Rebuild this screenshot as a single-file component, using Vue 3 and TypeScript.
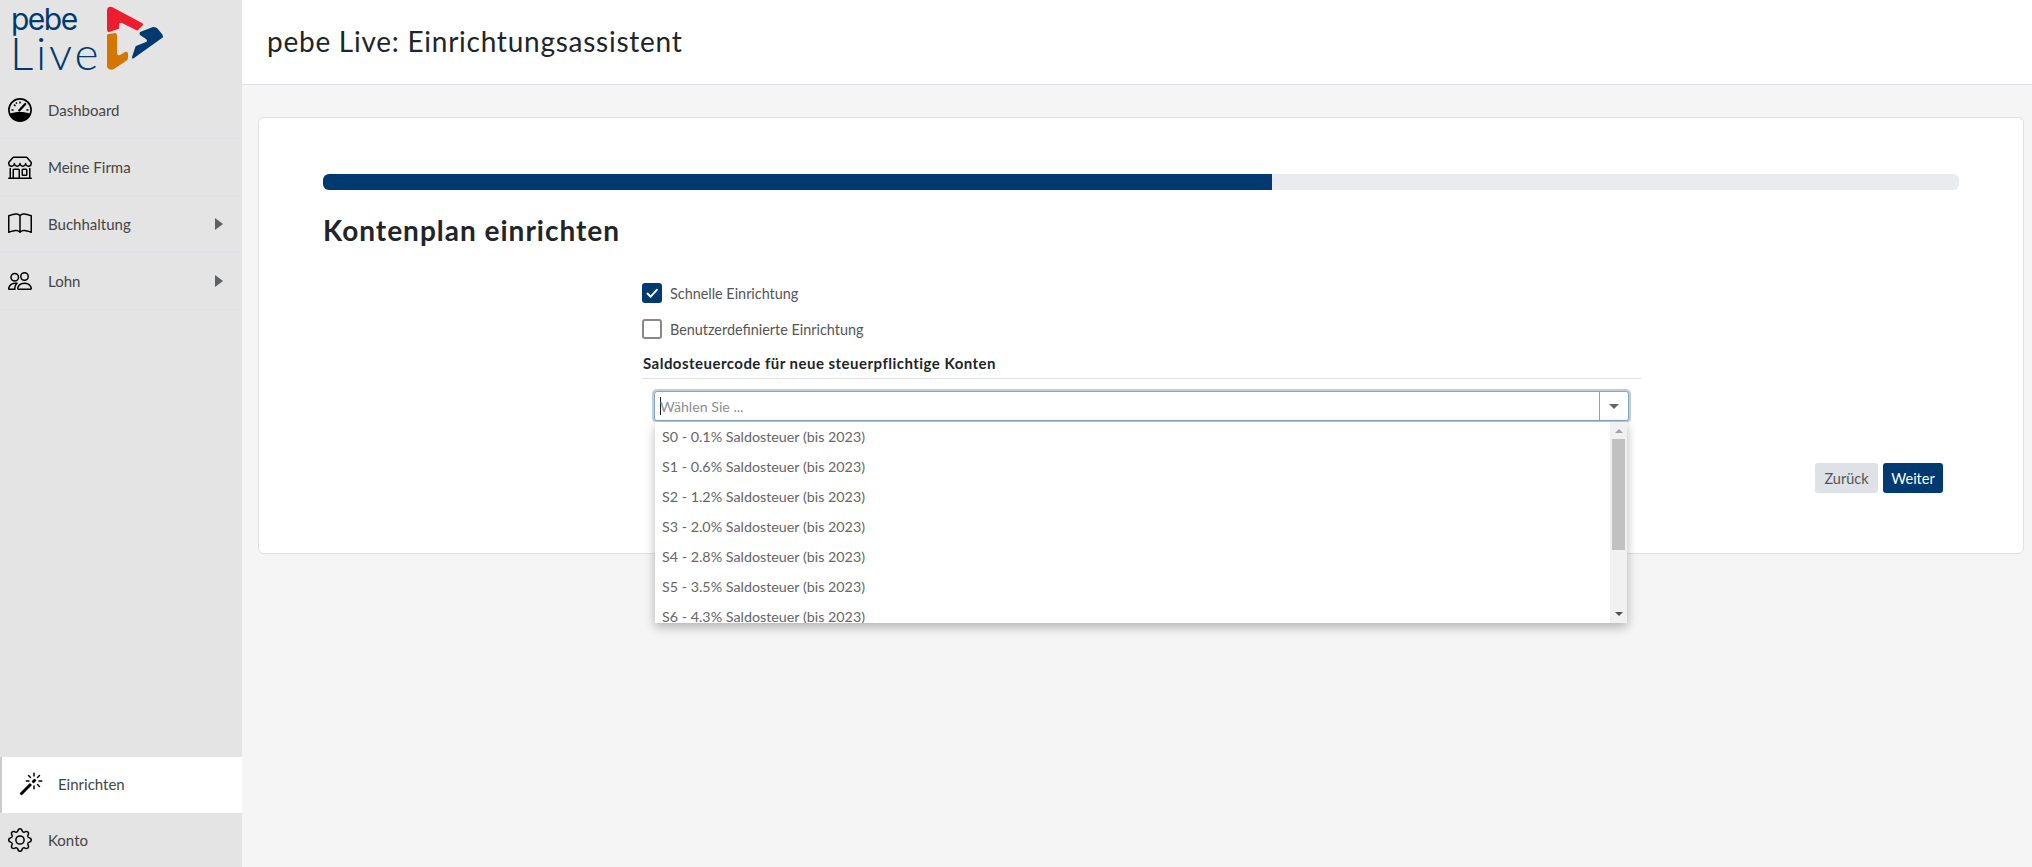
<script setup lang="ts">
const options = [
  'S0 - 0.1% Saldosteuer (bis 2023)',
  'S1 - 0.6% Saldosteuer (bis 2023)',
  'S2 - 1.2% Saldosteuer (bis 2023)',
  'S3 - 2.0% Saldosteuer (bis 2023)',
  'S4 - 2.8% Saldosteuer (bis 2023)',
  'S5 - 3.5% Saldosteuer (bis 2023)',
  'S6 - 4.3% Saldosteuer (bis 2023)',
]
</script>

<template>
  <div class="app">
    <aside class="sidebar">
      <div class="logo">
        <div class="logo-text">
          <span class="logo-pebe">pebe</span>
          <span class="logo-live">Live</span>
        </div>
        <svg class="logo-mark" viewBox="0 0 70 75" width="70" height="75">
          <path d="M7 11 Q7 6 12 7 L42 23 Q44 24 43 25 L38 30 Q37 31 36 30 L22 23 Q19 22 19 25 L19 28 Q19 29 18 29 L9 32 Q7 32 7 30 Z" fill="#ed1c2e" />
          <path d="M40 32 L53 27 Q55 27 57 28 L62 34 Q64 37 62 38 L34 58 Q32 60 32 57 L35 48 Q35 47 36 46 L46 42 Q48 41 46 39 L40 35 Q39 33 40 32 Z" fill="#003a70" />
          <path d="M7 35 Q7 34 9 34 L15 33 Q17 33 17 35 L17 53 Q17 56 20 55 L25 52 Q28 51 28 54 L28 58 Q28 60 26 61 L14 69 Q9 71 7 67 Z" fill="#d47600" />
        </svg>
      </div>
      <nav class="nav">
        <a class="nav-item">
          <svg class="icon" viewBox="0 0 16 16"><circle cx="8" cy="8" r="7.400" fill="none" stroke="#000" stroke-width="1.100"/><path d="M.9 10.500C3 9.600 5.500 9.300 8 9.300s5 .3 7.100 1.200C14.300 13.500 11.400 15.500 8 15.500S1.700 13.500.9 10.500Z" fill="#000"/><path d="M8 2.300v1.400M4 4.400l1 .9M2.300 8h1.400M12.300 8h1.400M5.400 2.900l.4.900" stroke="#000" stroke-width="1" fill="none"/><path d="M7.500 8.300 11.500 4" stroke="#000" stroke-width="1.500" stroke-linecap="round" fill="none"/></svg>
          <span>Dashboard</span>
        </a>
        <a class="nav-item">
          <svg class="icon" viewBox="0 0 16 16"><path d="M2.970 1.350A1 1 0 0 1 3.730 1h8.540a1 1 0 0 1 .76.35l2.609 3.044A1.500 1.500 0 0 1 16 5.370v.255a2.375 2.375 0 0 1-4.250 1.458A2.371 2.371 0 0 1 9.875 8 2.370 2.370 0 0 1 8 7.083 2.370 2.370 0 0 1 6.125 8a2.370 2.370 0 0 1-1.875-.917A2.375 2.375 0 0 1 0 5.625V5.370a1.500 1.500 0 0 1 .361-.976l2.610-3.045zm1.780 4.275a1.375 1.375 0 0 0 2.750 0 .5.5 0 0 1 1 0 1.375 1.375 0 0 0 2.750 0 .5.5 0 0 1 1 0 1.375 1.375 0 1 0 2.750 0V5.370a.5.5 0 0 0-.12-.325L12.270 2H3.730L1.120 5.045A.5.5 0 0 0 1 5.370v.255a1.375 1.375 0 0 0 2.750 0 .5.5 0 0 1 1 0zM1.500 8.500A.5.5 0 0 1 2 9v6h1v-5a1 1 0 0 1 1-1h3a1 1 0 0 1 1 1v5h6V9a.5.5 0 0 1 1 0v6h.5a.5.5 0 0 1 0 1H.5a.5.5 0 0 1 0-1H1V9a.5.5 0 0 1 .5-.5zM4 15h3v-5H4v5zm5-5a1 1 0 0 1 1-1h2a1 1 0 0 1 1 1v3a1 1 0 0 1-1 1h-2a1 1 0 0 1-1-1v-3zm3 0h-2v3h2v-3z"/></svg>
          <span>Meine Firma</span>
        </a>
        <a class="nav-item">
          <svg class="icon" viewBox="0 0 16 16"><path d="M1 2.828c.885-.37 2.154-.769 3.388-.893 1.330-.134 2.458.063 3.112.752v9.746c-.935-.53-2.120-.603-3.213-.493-1.180.12-2.370.461-3.287.811V2.828zm7.500-.141c.654-.689 1.782-.886 3.112-.752 1.234.124 2.503.523 3.388.893v9.923c-.918-.35-2.107-.692-3.287-.81-1.094-.111-2.278-.039-3.213.492V2.687zM8 1.783C7.015.936 5.587.81 4.287.94c-1.514.153-3.042.672-3.994 1.105A.5.5 0 0 0 0 2.500v11a.5.5 0 0 0 .707.455c.882-.4 2.303-.881 3.680-1.020 1.409-.142 2.590.087 3.223.877a.5.5 0 0 0 .78 0c.633-.79 1.814-1.019 3.222-.877 1.378.139 2.800.62 3.681 1.020A.5.5 0 0 0 16 13.500v-11a.5.5 0 0 0-.293-.455c-.952-.433-2.480-.952-3.994-1.105C10.413.809 8.985.936 8 1.783z"/></svg>
          <span>Buchhaltung</span>
          <i class="caret-right"></i>
        </a>
        <a class="nav-item">
          <svg class="icon" viewBox="0 0 16 16"><path d="M15 14s1 0 1-1-1-4-5-4-5 3-5 4 1 1 1 1h8zm-7.978-1A.261.261 0 0 1 7 12.996c.001-.264.167-1.030.76-1.720C8.312 10.629 9.282 10 11 10c1.717 0 2.687.63 3.240 1.276.593.69.758 1.457.76 1.720l-.008.002a.274.274 0 0 1-.014.002H7.022zM11 7a2 2 0 1 0 0-4 2 2 0 0 0 0 4zm3-2a3 3 0 1 1-6 0 3 3 0 0 1 6 0zM6.936 9.280a5.880 5.880 0 0 0-1.230-.247A7.350 7.350 0 0 0 5 9c-4 0-5 3-5 4 0 .667.333 1 1 1h4.216A2.238 2.238 0 0 1 5 13c0-1.010.377-2.042 1.090-2.904.243-.294.526-.569.846-.816zM4.920 10A5.493 5.493 0 0 0 4 13H1c0-.26.164-1.030.76-1.724.545-.636 1.492-1.256 3.160-1.275zM1.500 5.500a3 3 0 1 1 6 0 3 3 0 0 1-6 0zm3-2a2 2 0 1 0 0 4 2 2 0 0 0 0-4z"/></svg>
          <span>Lohn</span>
          <i class="caret-right"></i>
        </a>
      </nav>
      <div class="sidebar-bottom">
        <a class="nav-active">
          <svg class="icon" viewBox="0 0 16 16"><path d="M9.500 2.672a.5.5 0 1 0 1 0V.843a.5.5 0 0 0-1 0v1.829Zm4.500.035A.5.5 0 0 0 13.293 2L12 3.293a.5.5 0 1 0 .707.707L14 2.707ZM7.293 4A.5.5 0 1 0 8 3.293L6.707 2A.5.5 0 0 0 6 2.707L7.293 4Zm-.621 2.500a.5.5 0 1 0 0-1H4.843a.5.5 0 1 0 0 1h1.829Zm8.485 0a.5.5 0 1 0 0-1h-1.829a.5.5 0 0 0 0 1h1.829ZM13.293 10A.5.5 0 1 0 14 9.293L12.707 8a.5.5 0 1 0-.707.707L13.293 10ZM9.500 11.157a.5.5 0 0 0 1 0V9.328a.5.5 0 0 0-1 0v1.829Zm1.854-5.097a.5.5 0 0 0 0-.706l-.708-.708a.5.5 0 0 0-.707 0L8.646 5.940a.5.5 0 0 0 0 .707l.708.708a.5.5 0 0 0 .707 0l1.293-1.293Zm-3 3a.5.5 0 0 0 0-.706l-.708-.708a.5.5 0 0 0-.707 0L.646 13.940a.5.5 0 0 0 0 .707l.708.708a.5.5 0 0 0 .707 0L8.354 9.060Z"/></svg>
          <span>Einrichten</span>
        </a>
        <a class="nav-konto">
          <svg class="icon" viewBox="0 0 16 16"><path d="M8 4.754a3.246 3.246 0 1 0 0 6.492 3.246 3.246 0 0 0 0-6.492zM5.754 8a2.246 2.246 0 1 1 4.492 0 2.246 2.246 0 0 1-4.492 0z"/><path d="M9.796 1.343c-.527-1.790-3.065-1.790-3.592 0l-.094.319a.873.873 0 0 1-1.255.52l-.292-.16c-1.640-.892-3.433.902-2.540 2.541l.159.292a.873.873 0 0 1-.52 1.255l-.319.094c-1.790.527-1.790 3.065 0 3.592l.319.094a.873.873 0 0 1 .52 1.255l-.16.292c-.892 1.640.901 3.434 2.541 2.540l.292-.159a.873.873 0 0 1 1.255.52l.094.319c.527 1.790 3.065 1.790 3.592 0l.094-.319a.873.873 0 0 1 1.255-.52l.292.16c1.640.893 3.434-.902 2.540-2.541l-.159-.292a.873.873 0 0 1 .52-1.255l.319-.094c1.790-.527 1.790-3.065 0-3.592l-.319-.094a.873.873 0 0 1-.52-1.255l.16-.292c.893-1.640-.902-3.433-2.541-2.540l-.292.159a.873.873 0 0 1-1.255-.52l-.094-.319zm-2.633.283c.246-.835 1.428-.835 1.674 0l.094.319a1.873 1.873 0 0 0 2.693 1.115l.291-.16c.764-.415 1.600.42 1.184 1.185l-.159.292a1.873 1.873 0 0 0 1.116 2.692l.318.094c.835.246.835 1.428 0 1.674l-.319.094a1.873 1.873 0 0 0-1.115 2.693l.16.291c.415.764-.42 1.600-1.185 1.184l-.291-.159a1.873 1.873 0 0 0-2.693 1.116l-.094.318c-.246.835-1.428.835-1.674 0l-.094-.319a1.873 1.873 0 0 0-2.692-1.115l-.292.16c-.764.415-1.600-.42-1.184-1.185l.159-.291A1.873 1.873 0 0 0 1.945 8.930l-.319-.094c-.835-.246-.835-1.428 0-1.674l.319-.094A1.873 1.873 0 0 0 3.060 4.377l-.16-.292c-.415-.764.42-1.600 1.185-1.184l.292.159a1.873 1.873 0 0 0 2.692-1.115l.094-.319z"/></svg>
          <span>Konto</span>
        </a>
      </div>
    </aside>

    <main class="main">
      <header class="topbar">pebe Live: Einrichtungsassistent</header>
      <div class="content">
        <section class="card">
          <div class="progress"><div class="progress-bar" :style="{ width: '58%' }"></div></div>
          <h2 class="title">Kontenplan einrichten</h2>
          <div class="form">
            <label class="check">
              <span class="box box-on">
                <svg viewBox="0 0 20 20" width="20" height="20"><path d="M5.500 10.500 8.700 13.700 14.800 6.800" fill="none" stroke="#fff" stroke-width="2" stroke-linecap="round" stroke-linejoin="round"/></svg>
              </span>
              <span>Schnelle Einrichtung</span>
            </label>
            <label class="check">
              <span class="box"></span>
              <span>Benutzerdefinierte Einrichtung</span>
            </label>
            <div class="legend">Saldosteuercode für neue steuerpflichtige Konten</div>
            <div class="select-wrap">
              <div class="select">
                <div class="select-input"><i class="text-cursor"></i><span>Wählen Sie ...</span></div>
                <div class="select-btn"><i class="caret-down"></i></div>
              </div>
              <div class="dropdown">
                <ul class="list">
                  <li v-for="o in options" :key="o">{{ o }}</li>
                </ul>
                <div class="scrollbar">
                  <i class="sb-up"></i>
                  <div class="sb-track"><div class="sb-thumb"></div></div>
                  <i class="sb-down"></i>
                </div>
              </div>
            </div>
          </div>
          <div class="actions">
            <button class="btn btn-back">Zurück</button>
            <button class="btn btn-next">Weiter</button>
          </div>
        </section>
      </div>
    </main>
  </div>
</template>

<style>
html, body { margin: 0; padding: 0; background: #f5f5f5; }
</style>

<style scoped>
.app {
  display: flex;
  height: 867px;
  overflow: hidden;
  font-family: "Lato", "Open Sans", sans-serif;
  color: #212529;
}
.sidebar {
  width: 242px;
  flex: none;
  background: #e4e4e4;
  display: flex;
  flex-direction: column;
}
.logo {
  height: 82px;
  display: flex;
  padding-left: 13px;
  box-sizing: border-box;
}
.logo-text {
  display: flex;
  flex-direction: column;
  color: #003a70;
  width: 87px;
}
.logo-pebe {
  font: 400 30px/31px "Inter", sans-serif;
  letter-spacing: -1.500px;
  margin: 4px 0 0 -2px;
  height: 31px;
}
.logo-live {
  font: 300 46px/38px "Lato", sans-serif;
  letter-spacing: 2.800px;
  height: 38px;
  margin: -1px 0 0 -3px;
}
.logo-mark { flex: none; }
.nav { display: flex; flex-direction: column; }
.nav-item {
  height: 57px;
  box-sizing: border-box;
  border-bottom: 1px solid #dee2e6;
  display: flex;
  align-items: center;
  padding: 0 19px 0 8px;
  font-size: 15px;
  color: #444;
}
.icon { width: 24px; height: 24px; flex: none; fill: #000; }
.nav-item .icon { margin-right: 16px; }
.nav-item span { flex: 1; }
.caret-right {
  width: 0; height: 0;
  border-left: 8px solid #5c6166;
  border-top: 6px solid transparent;
  border-bottom: 6px solid transparent;
}
.sidebar-bottom { margin-top: auto; display: flex; flex-direction: column; }
.nav-active {
  height: 56px;
  box-sizing: border-box;
  background: #fff;
  border-left: 2px solid #ccc;
  display: flex;
  align-items: center;
  padding: 0 0 2px 17px;
  font-size: 15px;
  color: #444;
}
.nav-active .icon { margin-right: 15px; }
.nav-konto {
  height: 54px;
  display: flex;
  align-items: center;
  padding-left: 8px;
  font-size: 15px;
  color: #444;
}
.nav-konto .icon { margin-right: 16px; }
.main { flex: 1; display: flex; flex-direction: column; min-width: 0; background: #f5f5f5; }
.topbar {
  height: 85px;
  box-sizing: border-box;
  background: #fff;
  border-bottom: 1px solid #dee2e6;
  padding-left: 25px;
  display: flex;
  align-items: center;
  padding-bottom: 2px;
  font-size: 28px;
  letter-spacing: .75px;
  color: #212529;
}
.content { padding: 32px 8px 0 16px; }
.card {
  height: 437px;
  box-sizing: border-box;
  background: #fff;
  border: 1px solid #e0e0e0;
  border-radius: 6px;
  padding: 56px 64px 0;
  display: flex;
  flex-direction: column;
}
.progress {
  height: 16px;
  background: #e9ecef;
  border-radius: 6px;
  overflow: hidden;
}
.progress-bar { height: 100%; background: #003a70; }
.title {
  margin: 24px 0 0;
  font-size: 28px;
  letter-spacing: 1px;
  line-height: 32px;
  font-weight: 700;
  color: #212529;
}
.form {
  width: 1000px;
  margin: 37px auto 0;
  padding-left: 1px;
  box-sizing: border-box;
  display: flex;
  flex-direction: column;
}
.check {
  display: flex;
  align-items: center;
  height: 20px;
  margin-bottom: 16px;
  font-size: 14.400px;
  color: #555;
  gap: 8px;
}
.box {
  width: 20px; height: 20px;
  box-sizing: border-box;
  border: 2px solid #888;
  border-radius: 3px;
  display: block;
  flex: none;
}
.box-on { background: #003a70; border: none; }
.box-on svg { display: block; }
.legend {
  margin-top: -2px;
  height: 25px;
  line-height: 20px;
  padding-left: 1px;
  font-size: 15px;
  letter-spacing: .47px;
  font-weight: 700;
  color: #212529;
  border-bottom: 1px solid #dee2e6;
}
.select-wrap { position: relative; margin: 12px 12px 0; }
.select {
  height: 30px;
  box-sizing: border-box;
  border: 1px solid #86a5c0;
  border-radius: 3px;
  box-shadow: 0 0 0 2px rgba(0, 58, 112, .25);
  background: #fff;
  display: flex;
}
.select-input {
  flex: 1;
  display: flex;
  align-items: center;
  padding-left: 5px;
  font-size: 14.200px;
  color: #8a8f94;
}
.text-cursor { width: 1px; height: 18px; background: #222; margin-right: -1px; }
.select-btn {
  width: 28px;
  border-left: 1px solid #86a5c0;
  display: flex;
  align-items: center;
  justify-content: center;
}
.caret-down {
  width: 0; height: 0;
  border-top: 5px solid #666;
  border-left: 5px solid transparent;
  border-right: 5px solid transparent;
}
.dropdown {
  position: absolute;
  left: 1px;
  right: 2px;
  top: 31px;
  height: 201px;
  background: #fff;
  box-shadow: 0 4px 10px rgba(0, 0, 0, .28);
  display: flex;
  z-index: 5;
}
.list {
  flex: 1;
  list-style: none;
  margin: 0;
  padding: 0;
  overflow: hidden;
}
.list li {
  height: 30px;
  line-height: 30px;
  padding-left: 7px;
  font-size: 14.300px;
  color: #666;
}
.scrollbar {
  width: 17px;
  background: #f1f1f1;
  display: flex;
  flex-direction: column;
  align-items: center;
}
.sb-up, .sb-down { width: 0; height: 0; border-left: 4px solid transparent; border-right: 4px solid transparent; flex: none; }
.sb-up { border-bottom: 4px solid #a3a3a3; margin: 7px 0 6px; }
.sb-down { border-top: 4px solid #505050; margin: 7px 0 7px; }
.sb-track { flex: 1; width: 100%; display: flex; justify-content: center; }
.sb-thumb { width: 13px; height: 111px; background: #c1c1c1; }
.actions {
  display: flex;
  justify-content: flex-end;
  gap: 5px;
  padding-right: 16px;
  margin-top: 42px;
}
.btn {
  height: 30px;
  border: none;
  border-radius: 3px;
  padding: 0;
  font: 400 14.500px "Lato", sans-serif;
}
.btn-back { width: 63px; background: #dee2e6; color: #555; }
.btn-next { width: 60px; background: #003a70; color: #fff; }
</style>
